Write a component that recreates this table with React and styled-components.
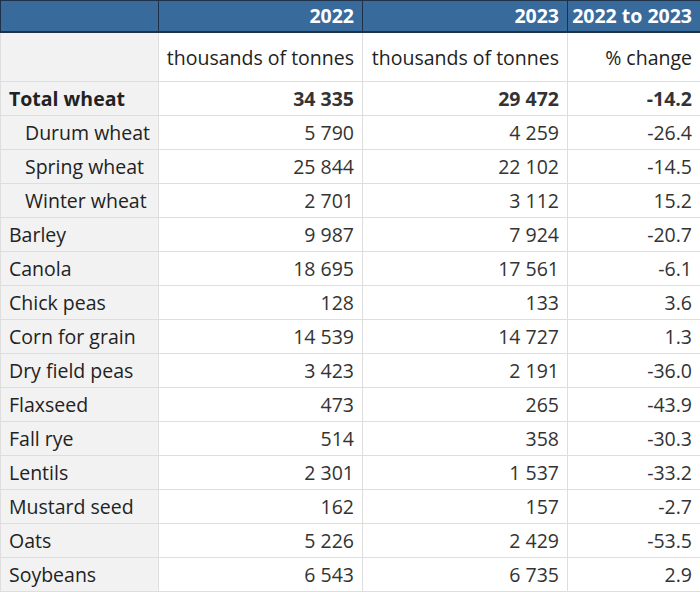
import React from 'react'
import styled, { createGlobalStyle } from 'styled-components'

const GlobalStyle = createGlobalStyle`
  body {
    margin: 0;
    background: #fff;
    font-family: 'Open Sans', 'Noto Sans', sans-serif;
  }
`

const Table = styled.table`
  border-collapse: collapse;
  width: 700px;
  table-layout: fixed;
  font-size: 19.5px;
  color: #222;
  white-space: nowrap;
`

const HeadCell = styled.th`
  background: #396a9c;
  color: #fff;
  font-weight: 700;
  text-align: right;
  height: 30px;
  padding: 0 8px 0 0;
  border: 1px solid #1e3148;
  border-bottom-width: 2px;
  line-height: 1;
`

const UnitCell = styled.td`
  height: 47px;
  padding: 1px 8px 0 0;
  text-align: right;
  vertical-align: middle;
  background: ${p => (p.stub ? '#f2f2f2' : '#fff')};
  border: 1px solid #dedede;
  border-top: none;
  line-height: 1;
`

const Stub = styled.th`
  background: #f2f2f2;
  text-align: left;
  font-weight: ${p => (p.bold ? 700 : 400)};
  padding: 0 0 0 ${p => (p.indent ? 24 : 8)}px;
  height: 33px;
  line-height: 1;
  border: 1px solid #dedede;
`

const Cell = styled.td`
  text-align: right;
  font-weight: ${p => (p.bold ? 700 : 400)};
  padding: 0 8px 0 0;
  height: 33px;
  line-height: 1;
  color: #333;
  border: 1px solid #dedede;
`

const rows = [
  ['Total wheat', '34 335', '29 472', '-14.2', 'bold'],
  ['Durum wheat', '5 790', '4 259', '-26.4', 'indent'],
  ['Spring wheat', '25 844', '22 102', '-14.5', 'indent'],
  ['Winter wheat', '2 701', '3 112', '15.2', 'indent'],
  ['Barley', '9 987', '7 924', '-20.7'],
  ['Canola', '18 695', '17 561', '-6.1'],
  ['Chick peas', '128', '133', '3.6'],
  ['Corn for grain', '14 539', '14 727', '1.3'],
  ['Dry field peas', '3 423', '2 191', '-36.0'],
  ['Flaxseed', '473', '265', '-43.9'],
  ['Fall rye', '514', '358', '-30.3'],
  ['Lentils', '2 301', '1 537', '-33.2'],
  ['Mustard seed', '162', '157', '-2.7'],
  ['Oats', '5 226', '2 429', '-53.5'],
  ['Soybeans', '6 543', '6 735', '2.9'],
]

export default function App() {
  return (
    <>
      <GlobalStyle />
      <Table>
        <colgroup>
          <col style={{ width: 158 }} />
          <col style={{ width: 204 }} />
          <col style={{ width: 205 }} />
          <col style={{ width: 133 }} />
        </colgroup>
        <thead>
          <tr>
            <HeadCell />
            <HeadCell>2022</HeadCell>
            <HeadCell>2023</HeadCell>
            <HeadCell>2022 to 2023</HeadCell>
          </tr>
          <tr>
            <UnitCell stub />
            <UnitCell>thousands of tonnes</UnitCell>
            <UnitCell>thousands of tonnes</UnitCell>
            <UnitCell>% change</UnitCell>
          </tr>
        </thead>
        <tbody>
          {rows.map(([name, a, b, c, kind]) => (
            <tr key={name}>
              <Stub bold={kind === 'bold'} indent={kind === 'indent'}>
                {name}
              </Stub>
              <Cell bold={kind === 'bold'}>{a}</Cell>
              <Cell bold={kind === 'bold'}>{b}</Cell>
              <Cell bold={kind === 'bold'}>{c}</Cell>
            </tr>
          ))}
        </tbody>
      </Table>
    </>
  )
}
